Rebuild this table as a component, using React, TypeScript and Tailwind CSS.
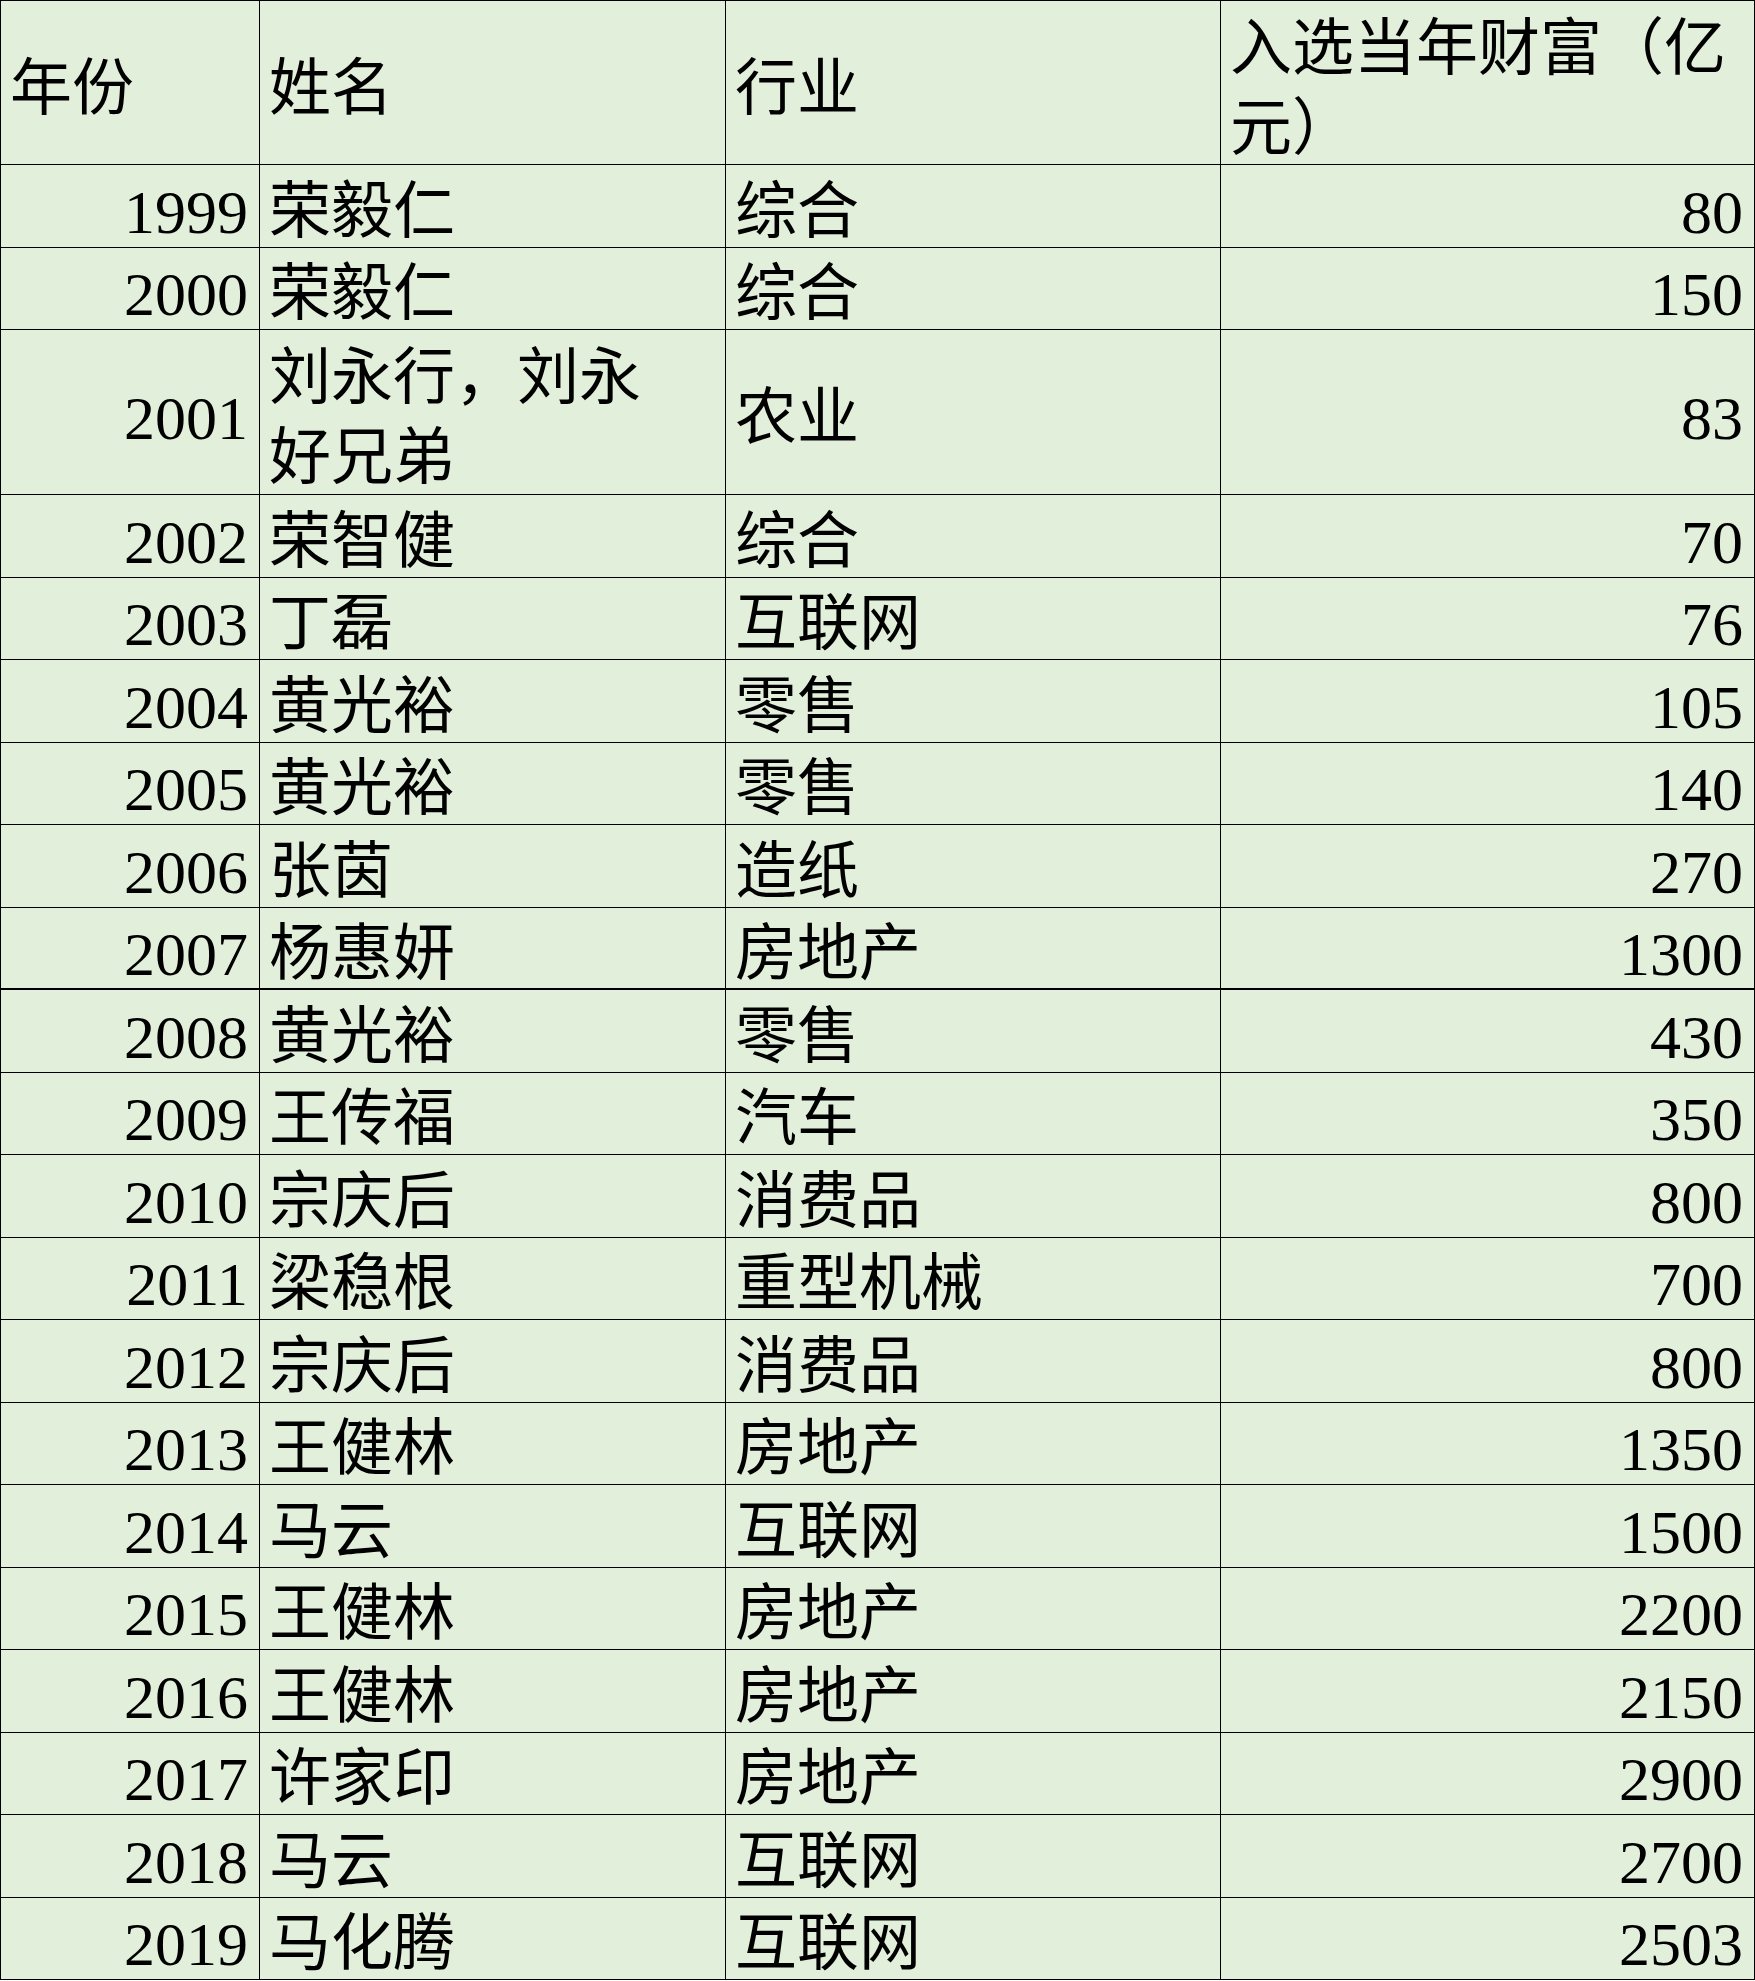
const rows = [
  { year: '1999', name: '荣毅仁', industry: '综合', wealth: '80' },
  { year: '2000', name: '荣毅仁', industry: '综合', wealth: '150' },
  { year: '2001', name: '刘永行，刘永|好兄弟', industry: '农业', wealth: '83', tall: true },
  { year: '2002', name: '荣智健', industry: '综合', wealth: '70' },
  { year: '2003', name: '丁磊', industry: '互联网', wealth: '76' },
  { year: '2004', name: '黄光裕', industry: '零售', wealth: '105' },
  { year: '2005', name: '黄光裕', industry: '零售', wealth: '140' },
  { year: '2006', name: '张茵', industry: '造纸', wealth: '270' },
  { year: '2007', name: '杨惠妍', industry: '房地产', wealth: '1300', thick: true },
  { year: '2008', name: '黄光裕', industry: '零售', wealth: '430' },
  { year: '2009', name: '王传福', industry: '汽车', wealth: '350' },
  { year: '2010', name: '宗庆后', industry: '消费品', wealth: '800' },
  { year: '2011', name: '梁稳根', industry: '重型机械', wealth: '700' },
  { year: '2012', name: '宗庆后', industry: '消费品', wealth: '800' },
  { year: '2013', name: '王健林', industry: '房地产', wealth: '1350' },
  { year: '2014', name: '马云', industry: '互联网', wealth: '1500' },
  { year: '2015', name: '王健林', industry: '房地产', wealth: '2200' },
  { year: '2016', name: '王健林', industry: '房地产', wealth: '2150' },
  { year: '2017', name: '许家印', industry: '房地产', wealth: '2900' },
  { year: '2018', name: '马云', industry: '互联网', wealth: '2700' },
  { year: '2019', name: '马化腾', industry: '互联网', wealth: '2503' },
];

// 单元格：垂直居中
const cell = 'flex items-center border-r border-b border-black leading-[80px]';
// 文字略微下移
const txt = 'translate-y-[6px]';

const App = () => {
  return (
    <div
      className="w-[1755px] h-[1981px] bg-white text-[62px] text-black"
      style={{ fontFamily: '"Liberation Serif", "Noto Sans CJK SC", serif' }}
    >
      <div className="border-l border-t border-black bg-[#e2efda] w-[1755px]">
        {/* 表头 */}
        <div className="grid grid-cols-[259px_466px_495px_534px] h-[164px]">
          <div className={`${cell} pl-[9px]`}>
            <span className={txt}>年份</span>
          </div>
          <div className={`${cell} pl-[9px]`}>
            <span className={txt}>姓名</span>
          </div>
          <div className={`${cell} pl-[9px]`}>
            <span className={txt}>行业</span>
          </div>
          <div className={`${cell} pl-[9px]`}>
            <span className={txt}>
              入选当年财富（亿
              <br />
              元）
            </span>
          </div>
        </div>

        {rows.map((r) => (
          <div
            key={r.year}
            className={`grid grid-cols-[259px_466px_495px_534px] ${r.tall ? 'h-[165px]' : 'h-[82.5px]'}`}
          >
            <div className={`${cell} justify-end pr-[11px] ${r.thick ? 'border-b-2' : ''}`}>
              <span className={txt}>{r.year}</span>
            </div>
            <div className={`${cell} pl-[9px] ${r.thick ? 'border-b-2' : ''}`}>
              <span className={txt}>
                {r.name.split('|').map((part, i) => (
                  <span key={i}>
                    {i > 0 && <br />}
                    {part}
                  </span>
                ))}
              </span>
            </div>
            <div className={`${cell} pl-[9px] ${r.thick ? 'border-b-2' : ''}`}>
              <span className={txt}>{r.industry}</span>
            </div>
            <div className={`${cell} justify-end pr-[11px] ${r.thick ? 'border-b-2' : ''}`}>
              <span className={txt}>{r.wealth}</span>
            </div>
          </div>
        ))}
      </div>
    </div>
  );
};

export default App;
